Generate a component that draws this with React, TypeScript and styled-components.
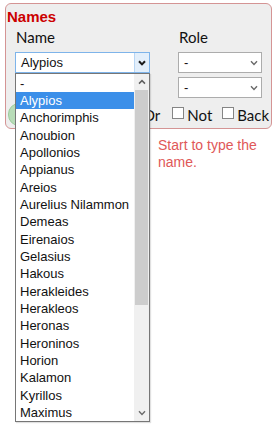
import React from "react";
import styled, { createGlobalStyle } from "styled-components";

const names = [
  "-",
  "Alypios",
  "Anchorimphis",
  "Anoubion",
  "Apollonios",
  "Appianus",
  "Areios",
  "Aurelius Nilammon",
  "Demeas",
  "Eirenaios",
  "Gelasius",
  "Hakous",
  "Herakleides",
  "Herakleos",
  "Heronas",
  "Heroninos",
  "Horion",
  "Kalamon",
  "Kyrillos",
  "Maximus",
];

const GlobalStyle = createGlobalStyle`
  body {
    margin: 0;
    background: #fff;
    font-family: "Liberation Sans", Arial, sans-serif;
  }
  #root {
    min-height: 430px;
  }
`;

function Chevron({ dark }: { dark?: boolean }) {
  return (
    <svg width="8" height="6" viewBox="0 0 8 6">
      <path
        d="M1 1.2 L4 4.4 L7 1.2"
        fill="none"
        stroke={dark ? "#1a1a1a" : "#6a6a6a"}
        strokeWidth={dark ? 2 : 1.4}
      />
    </svg>
  );
}

function UpArrow() {
  return (
    <svg width="8" height="6" viewBox="0 0 8 6">
      <path d="M1 4.6 L4 1.6 L7 4.6" fill="none" stroke="#606060" strokeWidth="1.5" />
    </svg>
  );
}

function App() {
  return (
    <>
      <GlobalStyle />
      <Panel>
        <Title>Names</Title>
        <Columns>
          <Field>
            <Label>Name</Label>
            <Select $focus>
              <SelectText>Alypios</SelectText>
              <ArrowBox $focus>
                <Chevron dark />
              </ArrowBox>
            </Select>
            <DropList>
              <Items>
                {names.map((n) => (
                  <Item key={n} $active={n === "Alypios"}>
                    {n}
                  </Item>
                ))}
              </Items>
              <ScrollBar>
                <ScrollArrow>
                  <UpArrow />
                </ScrollArrow>
                <Thumb />
                <ScrollRest />
                <ScrollArrow>
                  <Chevron />
                </ScrollArrow>
              </ScrollBar>
            </DropList>
          </Field>
          <Field>
            <Label>Role</Label>
            <Select>
              <SelectText>-</SelectText>
              <ArrowBox>
                <Chevron />
              </ArrowBox>
            </Select>
            <Select>
              <SelectText>-</SelectText>
              <ArrowBox>
                <Chevron />
              </ArrowBox>
            </Select>
          </Field>
        </Columns>
        <OptionRow>
          <GoButton type="button" aria-label="Search" />
          <Word>Or</Word>
          <Check $ml={12}>
            <Box />
            <Word>Not</Word>
          </Check>
          <Check $ml={10}>
            <Box />
            <Word>Back</Word>
          </Check>
        </OptionRow>
      </Panel>
      <Hint>Start to type the name.</Hint>
    </>
  );
}

const Panel = styled.div`
  box-sizing: border-box;
  width: 267px;
  margin: 3px 0 0 5px;
  padding: 4px 0 2px 0;
  background: #eeeeee;
  border: 1px solid #d49494;
  border-radius: 6px;
`;
const Title = styled.div`
  margin-left: 1px;
  font-size: 15px;
  line-height: 18px;
  font-weight: bold;
  color: #cc0000;
`;
const Columns = styled.div`
  display: grid;
  grid-template-columns: 135px 84px;
  column-gap: 28px;
  padding-left: 9px;
`;
const Field = styled.div`
  position: relative;
  display: flex;
  flex-direction: column;
  gap: 4px;
`;
const Label = styled.div`
  font-family: Lato, "Liberation Sans", sans-serif;
  font-size: 15px;
  line-height: 22px;
  color: #111;
  padding-left: 1px;
`;
const Select = styled.div<{ $focus?: boolean }>`
  box-sizing: border-box;
  display: flex;
  align-items: stretch;
  height: 21px;
  background: #fff;
  border: 1px solid ${(p) => (p.$focus ? "#7eb4ea" : "#acacac")};
`;
const SelectText = styled.div`
  flex: 1;
  padding-left: 5px;
  font-size: 13px;
  line-height: 19px;
  color: #111;
`;
const ArrowBox = styled.div<{ $focus?: boolean }>`
  width: 14px;
  display: flex;
  align-items: center;
  justify-content: center;
  background: ${(p) => (p.$focus ? "#e3effb" : "transparent")};
  border-left: 1px solid ${(p) => (p.$focus ? "#b9d6f4" : "transparent")};
`;
const DropList = styled.div`
  position: absolute;
  top: 47px;
  left: 0;
  z-index: 2;
  box-sizing: border-box;
  width: 135px;
  height: 349px;
  display: flex;
  background: #fff;
  border: 1px solid #767676;
  box-shadow: 1px 1px 1px rgba(0, 0, 0, 0.12);
`;
const Items = styled.div`
  flex: 1;
  padding-top: 0.5px;
`;
const Item = styled.div<{ $active?: boolean }>`
  height: 17.35px;
  line-height: 17.35px;
  padding-left: 4px;
  font-size: 13px;
  white-space: nowrap;
  color: ${(p) => (p.$active ? "#fff" : "#111")};
  background: ${(p) => (p.$active ? "#3b8fe9" : "transparent")};
`;
const ScrollBar = styled.div`
  width: 15px;
  display: flex;
  flex-direction: column;
  background: #f0f0f0;
`;
const ScrollArrow = styled.div`
  height: 16px;
  display: flex;
  align-items: center;
  justify-content: center;
`;
const Thumb = styled.div`
  height: 215px;
  margin: 0 1px;
  background: #cdcdcd;
`;
const ScrollRest = styled.div`
  flex: 1;
`;
const OptionRow = styled.div`
  display: flex;
  align-items: center;
  height: 23px;
  margin-top: 5px;
  padding-left: 2px;
`;
const GoButton = styled.button`
  box-sizing: border-box;
  width: 130px;
  height: 23px;
  border: 1px solid #9ccc9c;
  border-radius: 11px;
  background: #b8dcb8;
`;
const Word = styled.span`
  font-family: Lato, "Liberation Sans", sans-serif;
  font-size: 15px;
  color: #111;
  margin-left: 5px;
`;
const Check = styled.label<{ $ml: number }>`
  display: flex;
  align-items: center;
  margin-left: ${(p) => p.$ml}px;
  ${Word} {
    margin-left: 3px;
  }
`;
const Box = styled.span`
  box-sizing: border-box;
  width: 12px;
  height: 12px;
  margin-bottom: 4px;
  background: #fff;
  border: 1px solid #858585;
`;
const Hint = styled.div`
  width: 114px;
  margin: 8px 0 0 158px;
  font-size: 14px;
  line-height: 17px;
  color: #e05858;
`;

export default App;
